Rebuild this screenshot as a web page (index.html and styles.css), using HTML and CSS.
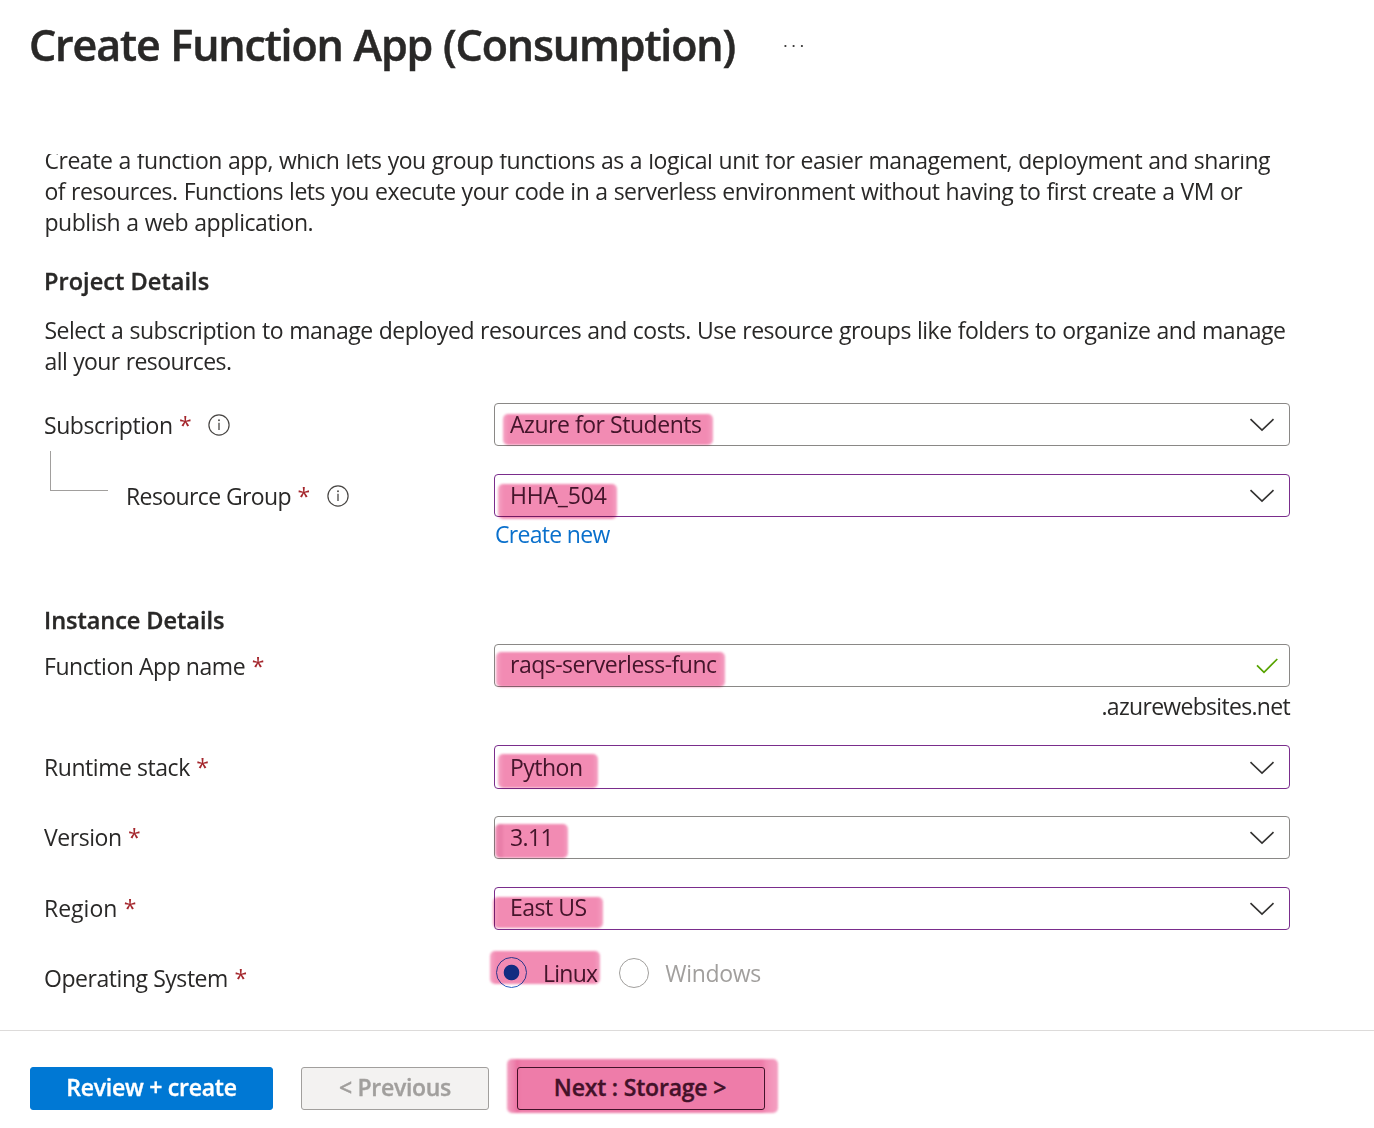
FILE: index.html
```html
<!DOCTYPE html>
<html lang="en">
<head>
<meta charset="utf-8">
<title>Create Function App (Consumption)</title>
<link rel="stylesheet" href="styles.css">
</head>
<body>
<svg width="0" height="0" class="defs" aria-hidden="true">
  <symbol id="chevron" viewBox="0 0 26 14"><path d="M1.5 1.2 L13 12.2 L24.5 1.2" fill="none" stroke="#323130" stroke-width="1.6"/></symbol>
  <symbol id="info" viewBox="0 0 22 22"><circle cx="11" cy="11" r="10.1" fill="none" stroke="#484644" stroke-width="1.2"/><path d="M11 8.8V16" stroke="#484644" stroke-width="1.3"/><circle cx="11" cy="6.3" r=".95" fill="#484644"/></symbol>
</svg>
<div class="page">
  <header class="header">
    <h1>Create Function App (Consumption)</h1>
    <svg class="more" width="22" height="4" viewBox="0 0 22 4"><g fill="#323130"><circle cx="2.4" cy="2" r="1.1"/><circle cx="10.6" cy="2" r="1.1"/><circle cx="18.9" cy="2" r="1.1"/></g></svg>
  </header>
  <main class="content">
    <p class="intro"><span class="l1">Create a function app, which lets you group functions as a logical unit for easier management, deployment and sharing</span><br><span class="l2">of resources. Functions lets you execute your code in a serverless environment without having to first create a VM or</span><br><span class="l3">publish a web application.</span></p>
    <h2 class="project">Project Details</h2>
    <p class="about">Select a subscription to manage deployed resources and costs. Use resource groups like folders to organize and manage<br><span class="l4">all your resources.</span></p>

    <div class="row subscription">
      <label>Subscription<span class="req">*</span><svg class="info" width="22" height="22"><use href="#info"/></svg></label>
      <div class="field"><span class="value t45">Azure for Students</span><svg class="chev" width="26" height="14"><use href="#chevron"/></svg><i class="mark m-azure"></i></div>
    </div>
    <div class="row group">
      <label class="t60"><span class="branch"></span>Resource Group<span class="req">*</span><svg class="info" width="22" height="22"><use href="#info"/></svg></label>
      <div class="field edited"><span class="value t15">HHA_504</span><svg class="chev" width="26" height="14"><use href="#chevron"/></svg><i class="mark m-group"></i></div>
    </div>
    <a class="create">Create new</a>

    <h2 class="instance">Instance Details</h2>
    <div class="row name">
      <label>Function App name<span class="req">*</span></label>
      <div class="field high"><span class="value t50">raqs-serverless-func</span><svg class="check" width="24" height="18" viewBox="0 0 24 18"><path d="M2 8.3 L9 15.3 L22.3 2" fill="none" stroke="#57a300" stroke-width="1.7"/></svg><i class="mark m-name"></i></div>
    </div>
    <div class="suffix">.azurewebsites.net</div>
    <div class="row runtime">
      <label>Runtime stack<span class="req">*</span></label>
      <div class="field edited"><span class="value t50">Python</span><svg class="chev" width="26" height="14"><use href="#chevron"/></svg><i class="mark m-python"></i></div>
    </div>
    <div class="row version">
      <label>Version<span class="req">*</span></label>
      <div class="field"><span class="value t60">3.11</span><svg class="chev" width="26" height="14"><use href="#chevron"/></svg><i class="mark m-version"></i></div>
    </div>
    <div class="row region">
      <label class="t0">Region<span class="req">*</span></label>
      <div class="field edited high"><span class="value t50">East US</span><svg class="chev" width="26" height="14"><use href="#chevron"/></svg><i class="mark m-region"></i></div>
    </div>
    <div class="row os">
      <label>Operating System<span class="req">*</span></label>
      <div class="radios">
        <span class="radio on"></span><span class="linux">Linux</span>
        <span class="radio"></span><span class="windows">Windows</span>
        <i class="mark m-linux"></i>
      </div>
    </div>
  </main>
  <footer class="footer">
    <button class="primary">Review + create</button>
    <button class="previous" disabled>&lt; Previous</button>
    <div class="next-wrap"><button class="next">Next : Storage &gt;</button><i class="mark m-next"></i></div>
  </footer>
</div>
</body>
</html>
```
FILE: styles.css
```css
* { box-sizing: border-box; }
body { margin: 0; background: #fff; color: #292827; font: 400 23px/31px "Open Sans", "Noto Sans", sans-serif; letter-spacing: -.4px; }
h1, h2, p { margin: 0; }
.defs { position: absolute; }
.page { width: 1374px; height: 1128px; display: flex; flex-direction: column; overflow: hidden; white-space: nowrap; }

.header { height: 154px; flex: none; display: flex; align-items: flex-start; padding: 15px 0 0 29px; }
h1 { font-size: 43px; line-height: 60px; font-weight: 600; letter-spacing: -1.13px; word-spacing: .8px; width: 754px; -webkit-text-stroke: .5px; }
.more { margin-top: 29px; }

.content { height: 876px; flex: none; overflow: hidden; padding: 0 84px 0 44px; display: flex; flex-direction: column; }
.intro { margin: -9px 0 0 .5px; word-spacing: .6px; }
.l1 { letter-spacing: -.48px; }
.l2 { letter-spacing: -.51px; }
.l3 { letter-spacing: -.46px; }
.about { margin: 18px 0 0 .5px; letter-spacing: -.49px; word-spacing: .6px; }
.l4 { letter-spacing: -.58px; }
h2 { font-size: 23.5px; line-height: 31px; font-weight: 600; -webkit-text-stroke: .35px; }
.project { margin-top: 28px; letter-spacing: .06px; }
.instance { margin-top: 55px; letter-spacing: -.04px; }

.row { display: flex; height: 43px; flex: none; align-items: center; }
.row label { width: 450px; flex: none; display: flex; align-items: center; letter-spacing: -.45px; }
.row label.t60 { letter-spacing: -.6px; }
.row label.t0 { letter-spacing: 0; }
.subscription { margin-top: 26px; }
.subscription label { padding-top: 1px; }
.group { margin-top: 28px; }
.group label { padding-top: 1px; }
.name { margin-top: 8px; }
.name label { padding-top: 2px; }
.runtime { margin-top: 23px; height: 44px; }
.version { margin-top: 27px; }
.region { margin-top: 28px; }
.req { color: #a4262c; margin-left: 6.5px; width: 13px; letter-spacing: 0; }
.info { margin: -1px 0 0 16px; }
.branch { width: 58px; height: 40px; margin: -50px 18px 0 6px; border: solid #a19f9d; border-width: 0 0 1px 1px; align-self: center; }

.field { position: relative; flex: 1; height: 100%; display: flex; align-items: center; justify-content: space-between; padding: 0 14px 0 15px; border: 1px solid #8a8886; border-radius: 4px; }
.edited { border-color: #7a2d8c; }
.high { padding-bottom: 2px; }
.value { color: #48253d; }
.chev { margin-top: 1px; }
.high .chev { margin-top: 2px; }
.check { margin: 2px -4px 0 0; }
.create { margin-left: 451px; margin-top: 2px; color: #0a70cc; letter-spacing: -.7px; align-self: flex-start; }
.suffix { margin-top: 4px; align-self: flex-end; letter-spacing: -.69px; }
.t15 { letter-spacing: -.2px; }
.t45 { letter-spacing: -.46px; }
.t50 { letter-spacing: -.51px; }
.t60 { letter-spacing: -.6px; }

.os { margin-top: 21px; }
.os label { margin-top: 12px; }
.radios { position: relative; display: flex; align-items: center; padding-left: 2px; }
.radio { width: 30px; height: 30px; border: 1px solid #a19f9d; border-radius: 50%; }
.radio.on { width: 31px; height: 31px; border-color: #2f63c4; background: radial-gradient(circle, #1450b8 7.4px, transparent 8.2px); }
.linux { color: #48253d; letter-spacing: -.75px; margin: 1px 22px 0 16px; }
.windows { color: #a19f9d; letter-spacing: -.33px; margin: 1px 0 0 16px; }

/* Highlighter strokes drawn over the values to fill in */
.mark { position: absolute; border-radius: 5px; background: linear-gradient(90deg, #f5a3c4, #f28bb3 6px, #f28bb3 calc(100% - 6px), #f4a0c2); mix-blend-mode: multiply; filter: blur(1px); pointer-events: none; }
.m-azure { left: 8px; top: 10px; width: 210px; height: 31px; }
.m-group { left: 3px; top: 9px; width: 119px; height: 35px; }
.m-name { left: 1px; top: 7px; width: 229px; height: 35px; }
.m-python { left: 3px; top: 8px; width: 100px; height: 34px; }
.m-version { left: 0; top: 7px; width: 73px; height: 34px; background: linear-gradient(90deg, #f3a0c1, #e97fa9 3px, #e97fa9 7px, #f28bb3 9px, #f28bb3 calc(100% - 5px), #f4a0c2); }
.m-region { left: -2px; top: 9px; width: 110px; height: 31px; }
.m-linux { left: -4px; top: -6px; width: 110px; height: 33px; }

.footer { flex: 1; display: flex; align-items: flex-start; border-top: 1px solid #dddbda; padding: 36px 0 0 30px; }
button { height: 43px; border-radius: 3px; font: 600 23px/31px "Open Sans", "Noto Sans", sans-serif; padding: 0 0 3px; border: 1px solid #a19f9d; -webkit-text-stroke: .35px; }
.primary { width: 243px; background: #0078d4; border-color: #0078d4; color: #fff; letter-spacing: -.25px; }
.previous { width: 188px; margin: 0 28px; background: #f3f2f1; color: #a19f9d; letter-spacing: -.3px; }
.next-wrap { position: relative; height: 43px; }
.next { width: 248px; background: #fff; border-color: #48253d; color: #48253d; letter-spacing: -.2px; padding-right: 2px; }
.m-next { left: -10px; top: -8px; width: 271px; height: 54px; background: linear-gradient(90deg, #f3a0c1, #ed7fab 8px, #e9709f 10px, #ee7ca9 14px, #ee7ca9 calc(100% - 16px), #f28db5 calc(100% - 12px), #f4a0c2); }
```
